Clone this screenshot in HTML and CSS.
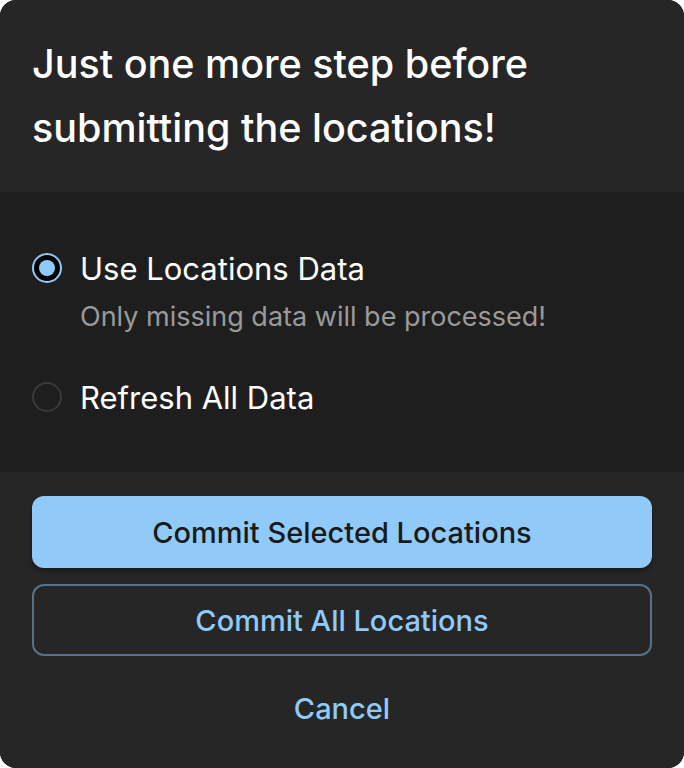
FILE: index.html
```html
<!DOCTYPE html>
<html lang="en">
<head>
<meta charset="utf-8">
<title>Submit locations</title>
<link rel="stylesheet" href="styles.css">
</head>
<body>
<div class="dialog">
  <header class="dialog-header">
    <h1 class="dialog-title">Just one more step before submitting the locations!</h1>
  </header>
  <section class="dialog-body">
    <label class="option">
      <span class="radio radio-checked"><span class="radio-dot"></span></span>
      <span class="option-label">Use Locations Data</span>
    </label>
    <p class="option-help">Only missing data will be processed!</p>
    <label class="option option-second">
      <span class="radio"></span>
      <span class="option-label">Refresh All Data</span>
    </label>
  </section>
  <footer class="dialog-actions">
    <button class="btn btn-primary">Commit Selected Locations</button>
    <button class="btn btn-outline">Commit All Locations</button>
    <button class="btn btn-text">Cancel</button>
  </footer>
</div>
</body>
</html>
```

FILE: styles.css
```css
* { box-sizing: border-box; }

html, body {
  margin: 0;
  padding: 0;
  background: #ffffff;
}

body {
  font-family: Inter, "Noto Sans", sans-serif;
  color: #ffffff;
}

.dialog {
  width: 684px;
  height: 768px;
  border-radius: 16px;
  overflow: hidden;
  background: #262626;
  display: flex;
  flex-direction: column;
}

.dialog-header {
  height: 192px;
  padding: 32px 32px;
  background: #262626;
}

.dialog-title {
  margin: 0;
  font-size: 39.5px;
  line-height: 64px;
  font-weight: 500;
  color: #ffffff;
}

.dialog-body {
  height: 280px;
  background: #1e1e1e;
  padding: 52px 32px 0;
  display: flex;
  flex-direction: column;
}

.option {
  display: flex;
  align-items: center;
  height: 48px;
  gap: 18px;
}

.option-second {
  margin-top: 40px;
}

.radio {
  width: 30px;
  height: 30px;
  border-radius: 50%;
  border: 2px solid #3a3a3a;
  display: flex;
  align-items: center;
  justify-content: center;
  flex: none;
}

.radio-checked {
  border: 2px solid #90caf9;
  background: #000000;
}

.radio-dot {
  width: 16px;
  height: 16px;
  border-radius: 50%;
  background: #90caf9;
}

.option-label {
  font-size: 31px;
  font-weight: 400;
  color: #ffffff;
}

.option-help {
  margin: 9px 0 0 48px;
  font-size: 27px;
  line-height: 32px;
  color: #9a9a9a;
}

.dialog-actions {
  flex: 1;
  background: #262626;
  padding: 24px 32px 24px;
  display: flex;
  flex-direction: column;
  gap: 16px;
}

.btn {
  height: 72px;
  width: 100%;
  border-radius: 12px;
  font-family: Inter, "Noto Sans", sans-serif;
  font-size: 29px;
  font-weight: 500;
  background: transparent;
  border: none;
  cursor: pointer;
}

.btn-primary {
  background: #90caf9;
  color: #1a1a1a;
  box-shadow: 0 3px 4px rgba(0, 0, 0, 0.35);
}

.btn-outline {
  border: 2px solid #56728a;
  color: #90caf9;
}

.btn-text {
  color: #90caf9;
}
```
